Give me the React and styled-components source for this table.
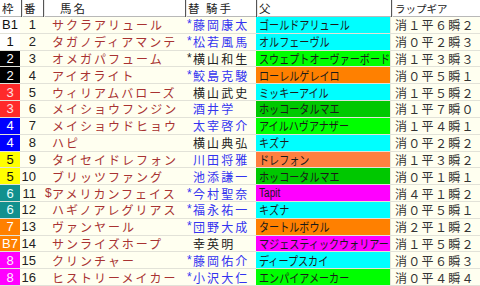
import React from 'react';
import styled, { createGlobalStyle } from 'styled-components';

const GlobalStyle = createGlobalStyle`
  html, body {
    margin: 0;
    padding: 0;
    background: #ffffff;
  }
  body {
    font-family: "Noto Sans CJK JP", "Noto Sans", sans-serif;
  }
`;

const COLS = '21px 22px 142px 71px 135px 89px';

const Table = styled.div`
  width: 480px;
  height: 286px;
  display: grid;
  grid-template-rows: 17px repeat(16, 1fr);
  background: #e6e6dc;
  overflow: hidden;
`;

const HeaderRow = styled.div`
  display: grid;
  grid-template-columns: ${COLS};
  background: #ffffff;
  box-shadow: inset 0 -1px 0 #b8b8b8;
`;

const HeadCell = styled.div`
  display: flex;
  align-items: center;
  padding-left: ${(p) => p.$pad || 2}px;
  font-size: ${(p) => p.$size || 11.5}px;
  letter-spacing: ${(p) => p.$ls ?? 2}px;
  line-height: 17px;
  color: #222;
  white-space: pre;
  border-left: ${(p) => (p.$first ? 'none' : '1px solid #555')};
  box-shadow: ${(p) => (p.$first ? 'none' : 'inset 1px 0 0 #e8e8e8')};
  box-sizing: border-box;
`;

const Row = styled.div`
  display: grid;
  grid-template-columns: ${COLS};
  border-bottom: 1px solid #e2e2d8;
  box-sizing: border-box;
  min-height: 0;
`;

const Cell = styled.div`
  display: flex;
  align-items: center;
  background: #fffff0;
  font-size: 12px;
  line-height: 15px;
  white-space: nowrap;
  box-sizing: border-box;
  min-width: 0;
`;

const FRAME = {
  1: ['#ffffff', '#111'],
  2: ['#000000', '#ffffff'],
  3: ['#ff2a2a', '#ffe0e0'],
  4: ['#0000ff', '#ffffff'],
  5: ['#ffff00', '#111'],
  6: ['#12908e', '#e8ffff'],
  7: ['#ff8000', '#ffffff'],
  8: ['#ff00ff', '#ffe8ff'],
};

const FrameCell = styled(Cell)`
  justify-content: center;
  background: ${(p) => FRAME[p.$frame][0]};
  color: ${(p) => FRAME[p.$frame][1]};
  font-family: "Liberation Sans", "Noto Sans", sans-serif;
  font-size: 13px;
  margin-right: 1px;
`;

const NumCell = styled(Cell)`
  justify-content: flex-end;
  padding-right: 7px;
  color: #222;
  font-family: "Liberation Sans", "Noto Sans", sans-serif;
  font-size: 13px;
  margin-left: -1px;
`;

const NameCell = styled(Cell)`
  padding-left: 2px;
  color: #a83232;
  letter-spacing: 2px;
`;

const Mark = styled.span`
  display: inline-block;
  flex: none;
  width: ${(p) => p.$w || 7}px;
  letter-spacing: 0;
  font-family: "Liberation Sans", sans-serif;
  font-size: 12px;
`;

const JockeyCell = styled(Cell)`
  padding-left: 2px;
  color: ${(p) => (p.$blue ? '#3434f0' : '#222')};
  letter-spacing: 2.1px;
`;

const SIRE = {
  cyan: '#00ffff',
  green: '#00ff00',
  dgreen: '#00c800',
  orange: '#ff8000',
  salmon: '#ff8040',
  magenta: '#ff00ff',
};

const SireCell = styled(Cell)`
  background: ${(p) => SIRE[p.$c]};
  color: #1a1a1a;
  padding-left: 3px;
  margin-right: 1px;
  overflow: hidden;
`;

const SireText = styled.span`
  display: inline-block;
  font-size: 12px;
  transform: scaleX(0.84);
  transform-origin: left center;
  font-family: ${(p) => (p.$latin ? '"Liberation Sans", sans-serif' : 'inherit')};
`;

const LapCell = styled(Cell)`
  padding-left: 4px;
  color: #333;
  letter-spacing: 1.3px;
`;

const rows = [
  ['B1', 1, 1, '', 'サクラアリュール', '*', '藤岡康太', 1, 'ゴールドアリュール', 'cyan', '消１平６瞬２'],
  ['1', 1, 2, '', 'タガノディアマンテ', '*', '松若風馬', 1, 'オルフェーヴル', 'cyan', '消０平２瞬３'],
  ['2', 2, 3, '', 'オメガパフューム', '*', '横山和生', 0, 'スウェプトオーヴァーボード', 'green', '消１平３瞬３'],
  ['2', 2, 4, '', 'アイオライト', '*', '鮫島克駿', 1, 'ローレルゲレイロ', 'orange', '消０平５瞬１'],
  ['3', 3, 5, '', 'ウィリアムバローズ', '', '横山武史', 0, 'ミッキーアイル', 'cyan', '消１平５瞬２'],
  ['3', 3, 6, '', 'メイショウフンジン', '', '酒井学', 1, 'ホッコータルマエ', 'dgreen', '消１平７瞬０'],
  ['4', 4, 7, '', 'メイショウドヒョウ', '', '太宰啓介', 1, 'アイルハヴアナザー', 'green', '消１平４瞬１'],
  ['4', 4, 8, '', 'ハピ', '', '横山典弘', 0, 'キズナ', 'cyan', '消０平２瞬２'],
  ['5', 5, 9, '', 'タイセイドレフォン', '', '川田将雅', 1, 'ドレフォン', 'salmon', '消１平３瞬２'],
  ['5', 5, 10, '', 'ブリッツファング', '', '池添謙一', 1, 'ホッコータルマエ', 'dgreen', '消０平１瞬１'],
  ['6', 6, 11, '$', 'アメリカンフェイス', '*', '今村聖奈', 1, 'Tapit', 'magenta', '消４平１瞬２'],
  ['6', 6, 12, '', 'ハギノアレグリアス', '*', '福永祐一', 1, 'キズナ', 'cyan', '消０平５瞬１'],
  ['7', 7, 13, '', 'ヴァンヤール', '*', '団野大成', 1, 'タートルボウル', 'orange', '消２平１瞬２'],
  ['B7', 7, 14, '', 'サンライズホープ', '', '幸英明', 0, 'マジェスティックウォリアー', 'magenta', '消１平５瞬２'],
  ['8', 8, 15, '', 'クリンチャー', '*', '藤岡佑介', 1, 'ディープスカイ', 'cyan', '消０平６瞬３'],
  ['8', 8, 16, '', 'ヒストリーメイカー', '*', '小沢大仁', 1, 'エンパイアメーカー', 'green', '消０平４瞬４'],
];

export default function App() {
  return (
    <>
      <GlobalStyle />
      <Table>
        <HeaderRow>
          <HeadCell $first $pad={0}>枠</HeadCell>
          <HeadCell $pad={2}>番</HeadCell>
          <HeadCell $pad={16}>馬名</HeadCell>
          <HeadCell $pad={2}>{'替 騎手'}</HeadCell>
          <HeadCell $pad={2}>父</HeadCell>
          <HeadCell $pad={3} $size={10.5} $ls={0}>ラップギア</HeadCell>
        </HeaderRow>
        {rows.map(([label, frame, num, hMark, horse, jMark, jockey, blue, sire, sc, lap]) => (
          <Row key={num}>
            <FrameCell $frame={frame}>{label}</FrameCell>
            <NumCell>{num}</NumCell>
            <NameCell>
              <Mark $w={7}>{hMark}</Mark>
              {horse}
            </NameCell>
            <JockeyCell $blue={blue}>
              <Mark $w={6}>{jMark}</Mark>
              {jockey}
            </JockeyCell>
            <SireCell $c={sc}>
              <SireText $latin={sire === 'Tapit'}>{sire}</SireText>
            </SireCell>
            <LapCell>{lap}</LapCell>
          </Row>
        ))}
      </Table>
    </>
  );
}
